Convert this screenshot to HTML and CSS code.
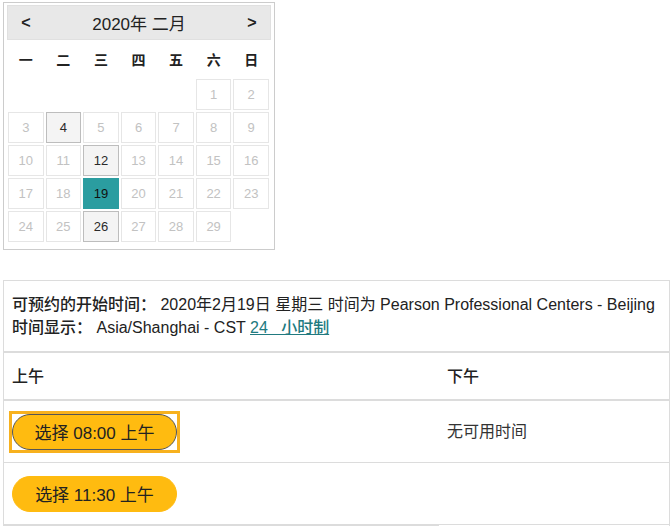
FILE: index.html
```html
<!DOCTYPE html>
<html lang="zh">
<head>
<meta charset="utf-8">
<link rel="stylesheet" href="styles.css">
</head>
<body>
<div class="cal">
  <div class="cal-head">
    <span class="nav">&lt;</span>
    <span class="title">2020年 二月</span>
    <span class="nav">&gt;</span>
  </div>
  <div class="grid">
    <div class="wd">一</div><div class="wd">二</div><div class="wd">三</div><div class="wd">四</div><div class="wd">五</div><div class="wd">六</div><div class="wd">日</div>
    <div class="empty"></div><div class="empty"></div><div class="empty"></div><div class="empty"></div><div class="empty"></div>
    <div class="d">1</div><div class="d">2</div>
    <div class="d">3</div><div class="d av">4</div><div class="d">5</div><div class="d">6</div><div class="d">7</div><div class="d">8</div><div class="d">9</div>
    <div class="d">10</div><div class="d">11</div><div class="d av">12</div><div class="d">13</div><div class="d">14</div><div class="d">15</div><div class="d">16</div>
    <div class="d">17</div><div class="d">18</div><div class="d sel">19</div><div class="d">20</div><div class="d">21</div><div class="d">22</div><div class="d">23</div>
    <div class="d">24</div><div class="d">25</div><div class="d av">26</div><div class="d">27</div><div class="d">28</div><div class="d">29</div>
  </div>
</div>

<div class="slots">
  <div class="info">
    <div><span class="lbl">可预约的开始时间：</span> 2020年2月19日 星期三 时间为 Pearson Professional Centers - Beijing</div>
    <div><span class="lbl">时间显示：</span> Asia/Shanghai - CST <a class="link" href="#">24&nbsp;&nbsp;&nbsp;小时制</a></div>
  </div>
  <div class="row head-row">
    <div class="c1">上午</div>
    <div class="c2">下午</div>
  </div>
  <div class="row slot-row first">
    <div class="c1"><span class="focus"><button class="btn focused">选择 08:00 上午</button></span></div>
    <div class="c2 none">无可用时间</div>
  </div>
  <div class="row slot-row last">
    <div class="c1 bottom"><button class="btn">选择 11:30 上午</button></div>
    <div class="c2 bottom-thin"></div>
  </div>
</div>
</body>
</html>
```
FILE: styles.css
```css
* { box-sizing: border-box; }
body {
  margin: 0;
  padding: 2px 0 0 3px;
  font-family: "Liberation Sans", "Noto Sans CJK SC", sans-serif;
  color: #222;
  background: #fff;
}
.cal {
  width: 272px;
  height: 248px;
  border: 1px solid #cccccc;
  padding: 2px 3px 0 3px;
}
.cal-head {
  height: 35px;
  background: #e8e8e8;
  border: 1px solid #e0e0e0;
  display: flex;
  align-items: center;
  justify-content: space-between;
  padding: 0 12px 0 12px;
  color: #222;
}
.nav {
  font-size: 16px;
  font-weight: bold;
  width: 12px;
  text-align: center;
}
.title {
  font-size: 17px;
}
.grid {
  display: grid;
  grid-template-columns: repeat(7, 1fr);
  grid-auto-rows: 31px;
  grid-template-rows: 36px;
  column-gap: 2px;
  row-gap: 2px;
  padding: 1px 2px 0 1px;
}
.wd {
  display: flex;
  align-items: center;
  justify-content: center;
  font-size: 14px;
  font-weight: bold;
  color: #222;
}
.d {
  border: 1px solid #e6e6e6;
  display: flex;
  align-items: center;
  justify-content: center;
  font-size: 13px;
  color: #c2c2c2;
}
.d.av {
  background: #f4f4f4;
  border-color: #bdbdbd;
  color: #2a2a2a;
}
.d.sel {
  background: #2b9da0;
  border-color: #2b9da0;
  color: #111;
}
.slots {
  margin-top: 30px;
  width: 667px;
  border: 1px solid #dcdcdc;
  border-bottom: none;
}
.info {
  padding: 12px 8px 12px 8px;
  font-size: 16px;
  line-height: 23px;
  color: #222;
  border-bottom: 2px solid #dcdcdc;
  white-space: nowrap;
}
.lbl { font-weight: 500; }
.link {
  color: #217a80;
  font-weight: 500;
  text-decoration: underline;
}
.row {
  display: flex;
}
.c1 {
  width: 435px;
  padding: 0 8px;
}
.c2 {
  flex: 1;
  padding: 0 8px;
}
.head-row {
  height: 48px;
  align-items: center;
  font-size: 16px;
  font-weight: 500;
  border-bottom: 2px solid #dcdcdc;
  padding-bottom: 3px;
}
.slot-row {
  align-items: stretch;
}
.slot-row .c1, .slot-row .c2 {
  display: flex;
  align-items: center;
  height: 61px;
}
.slot-row.first {
  border-bottom: 1px solid #dcdcdc;
}
.slot-row .c1.bottom {
  height: 63px;
  border-bottom: 2px solid #dcdcdc;
}
.slot-row .c2.bottom-thin {
  height: 62px;
  border-bottom: 1px solid #dcdcdc;
}
.none {
  font-size: 16px;
  color: #333;
  padding-bottom: 3px;
}
.focus {
  display: inline-block;
  outline: 3px solid #f7b11e;
  line-height: 0;
}
.btn {
  width: 165px;
  height: 36px;
  border-radius: 18px;
  background: #ffbb10;
  border: 1px solid #ffbb10;
  font-family: "Liberation Sans", "Noto Sans CJK SC", sans-serif;
  font-size: 17px;
  color: #222;
  padding: 0;
  cursor: pointer;
}
.btn.focused {
  border-color: #555;
}
```
